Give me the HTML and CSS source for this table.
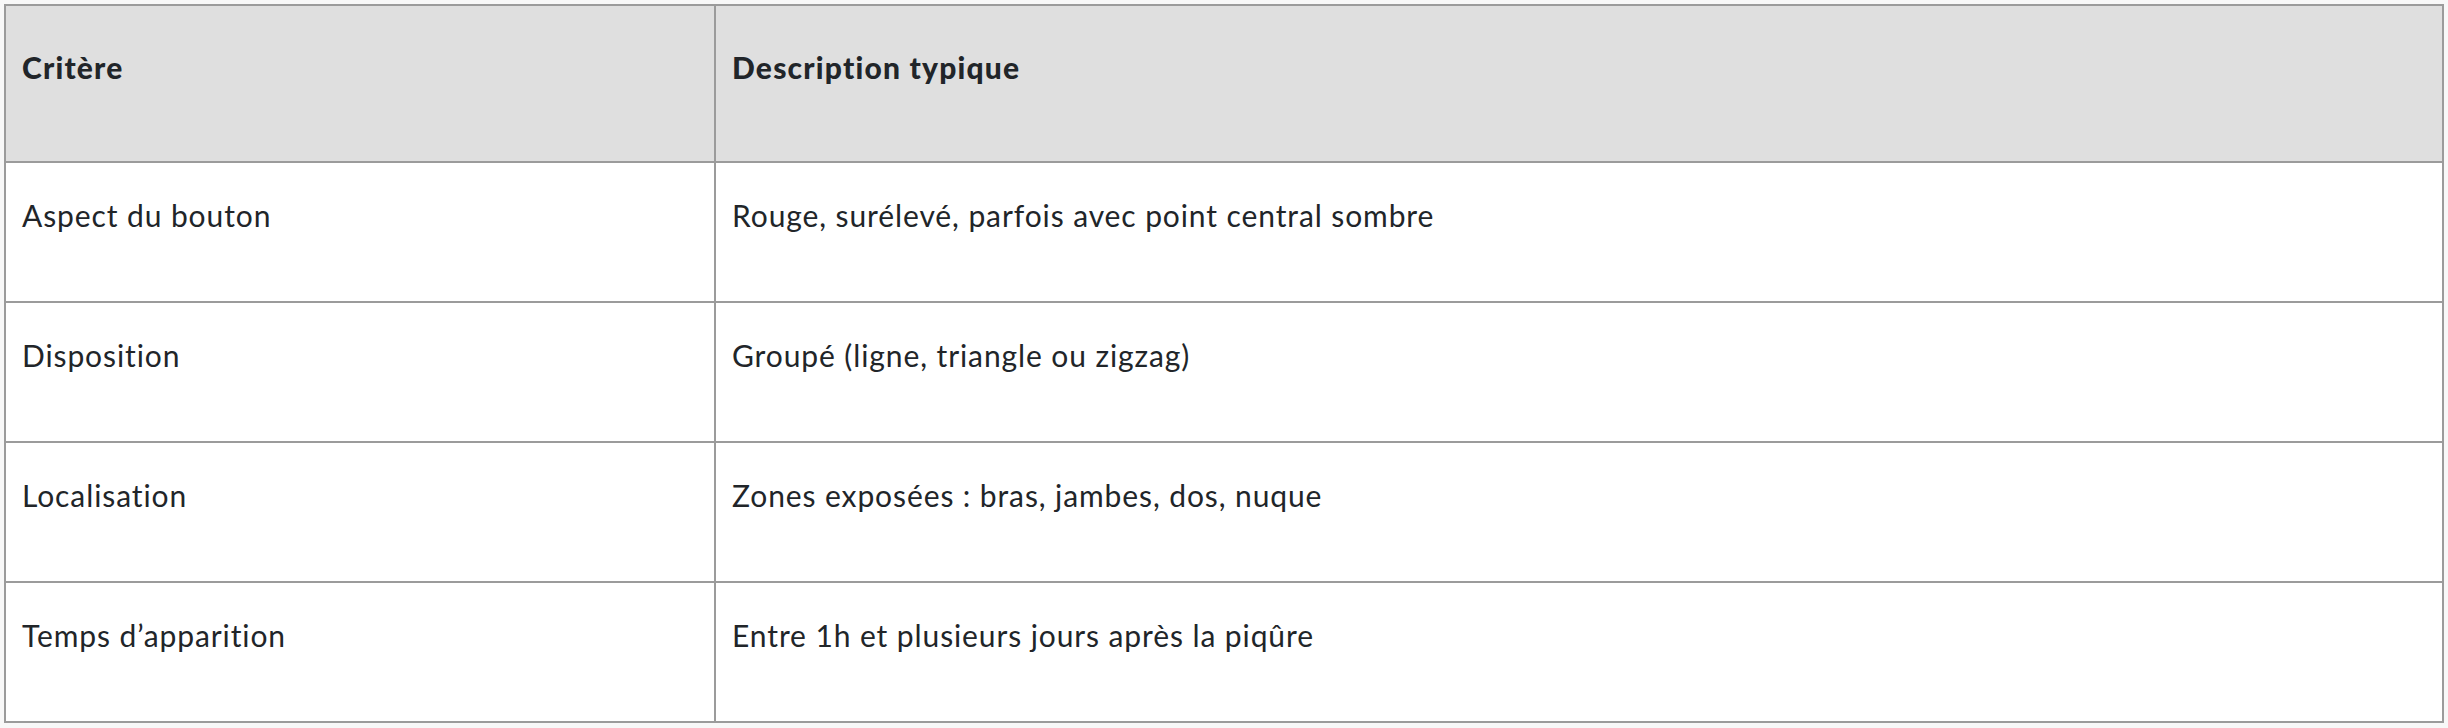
FILE: index.html
```html
<!DOCTYPE html>
<html lang="fr">
<head>
<meta charset="utf-8">
<title>Critères</title>
<link rel="stylesheet" href="styles.css">
</head>
<body>
<table class="grid">
  <thead>
    <tr>
      <th class="col-a">Critère</th>
      <th class="col-b">Description typique</th>
    </tr>
  </thead>
  <tbody>
    <tr>
      <td>Aspect du bouton</td>
      <td>Rouge, surélevé, parfois avec point central sombre</td>
    </tr>
    <tr>
      <td>Disposition</td>
      <td>Groupé (ligne, triangle ou zigzag)</td>
    </tr>
    <tr>
      <td>Localisation</td>
      <td>Zones exposées : bras, jambes, dos, nuque</td>
    </tr>
    <tr>
      <td>Temps d’apparition</td>
      <td>Entre 1h et plusieurs jours après la piqûre</td>
    </tr>
  </tbody>
</table>
</body>
</html>
```
FILE: styles.css
```css
html, body {
  margin: 0;
  background: #f8f8f8;
}
body {
  padding: 4px;
  font-family: Lato, "Noto Sans", sans-serif;
  color: #212529;
}
.grid {
  width: 2440px;
  border-collapse: separate;
  border-spacing: 0;
  border-top: 2px solid #9b9b9b;
  border-left: 2px solid #9b9b9b;
  table-layout: fixed;
}
.grid th,
.grid td {
  text-align: left;
  vertical-align: top;
  font-size: 30px;
  line-height: 45px;
  letter-spacing: 0.9px;
  padding: 30px 16px 63px;
  border-right: 2px solid #9b9b9b;
  border-bottom: 2px solid #9b9b9b;
  background: #fff;
  white-space: nowrap;
}
.grid th {
  background: #dfdfdf;
  font-weight: 900;
  letter-spacing: 1.2px;
  padding: 39px 16px 71px;
}
.grid .col-a {
  width: 676px;
}
```
